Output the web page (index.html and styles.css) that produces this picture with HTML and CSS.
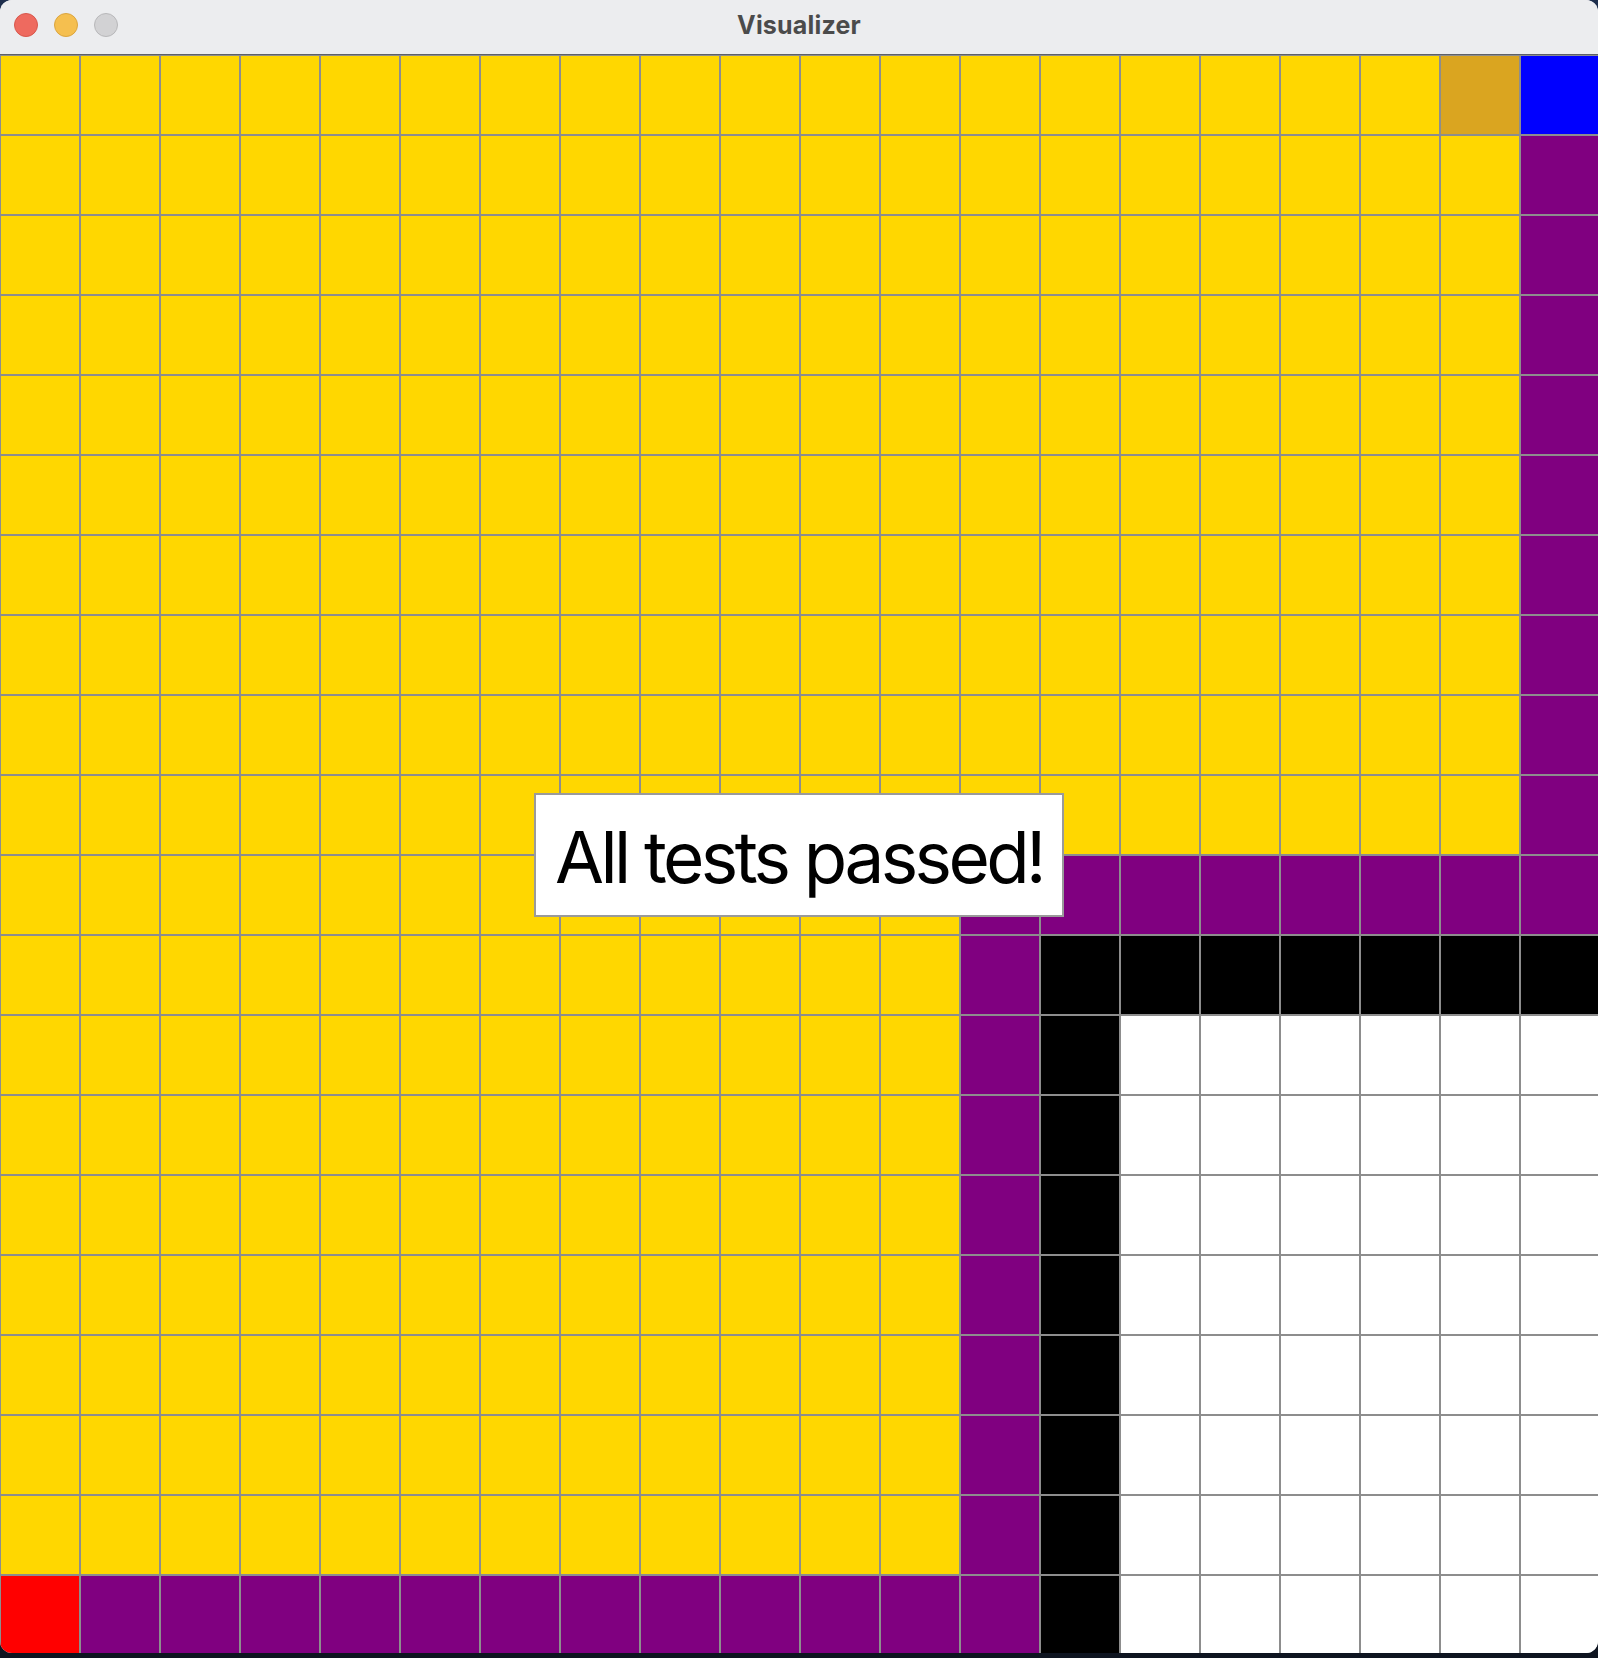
FILE: index.html
```html
<!DOCTYPE html>
<html>
<head>
<meta charset="utf-8">
<title>Visualizer</title>
<link rel="stylesheet" href="styles.css">
</head>
<body>
<div class="window">
  <div class="titlebar">
    <div class="lights">
      <span class="light close"></span>
      <span class="light min"></span>
      <span class="light max"></span>
    </div>
    <div class="title">Visualizer</div>
  </div>
  <div class="board">
    <div class="grid">
      <!-- row 0 -->
      <div class="y"></div><div class="y"></div><div class="y"></div><div class="y"></div><div class="y"></div><div class="y"></div><div class="y"></div><div class="y"></div><div class="y"></div><div class="y"></div><div class="y"></div><div class="y"></div><div class="y"></div><div class="y"></div><div class="y"></div><div class="y"></div><div class="y"></div><div class="y"></div><div class="g"></div><div class="b"></div>
      <!-- row 1 -->
      <div class="y"></div><div class="y"></div><div class="y"></div><div class="y"></div><div class="y"></div><div class="y"></div><div class="y"></div><div class="y"></div><div class="y"></div><div class="y"></div><div class="y"></div><div class="y"></div><div class="y"></div><div class="y"></div><div class="y"></div><div class="y"></div><div class="y"></div><div class="y"></div><div class="y"></div><div class="p"></div>
      <!-- row 2 -->
      <div class="y"></div><div class="y"></div><div class="y"></div><div class="y"></div><div class="y"></div><div class="y"></div><div class="y"></div><div class="y"></div><div class="y"></div><div class="y"></div><div class="y"></div><div class="y"></div><div class="y"></div><div class="y"></div><div class="y"></div><div class="y"></div><div class="y"></div><div class="y"></div><div class="y"></div><div class="p"></div>
      <!-- row 3 -->
      <div class="y"></div><div class="y"></div><div class="y"></div><div class="y"></div><div class="y"></div><div class="y"></div><div class="y"></div><div class="y"></div><div class="y"></div><div class="y"></div><div class="y"></div><div class="y"></div><div class="y"></div><div class="y"></div><div class="y"></div><div class="y"></div><div class="y"></div><div class="y"></div><div class="y"></div><div class="p"></div>
      <!-- row 4 -->
      <div class="y"></div><div class="y"></div><div class="y"></div><div class="y"></div><div class="y"></div><div class="y"></div><div class="y"></div><div class="y"></div><div class="y"></div><div class="y"></div><div class="y"></div><div class="y"></div><div class="y"></div><div class="y"></div><div class="y"></div><div class="y"></div><div class="y"></div><div class="y"></div><div class="y"></div><div class="p"></div>
      <!-- row 5 -->
      <div class="y"></div><div class="y"></div><div class="y"></div><div class="y"></div><div class="y"></div><div class="y"></div><div class="y"></div><div class="y"></div><div class="y"></div><div class="y"></div><div class="y"></div><div class="y"></div><div class="y"></div><div class="y"></div><div class="y"></div><div class="y"></div><div class="y"></div><div class="y"></div><div class="y"></div><div class="p"></div>
      <!-- row 6 -->
      <div class="y"></div><div class="y"></div><div class="y"></div><div class="y"></div><div class="y"></div><div class="y"></div><div class="y"></div><div class="y"></div><div class="y"></div><div class="y"></div><div class="y"></div><div class="y"></div><div class="y"></div><div class="y"></div><div class="y"></div><div class="y"></div><div class="y"></div><div class="y"></div><div class="y"></div><div class="p"></div>
      <!-- row 7 -->
      <div class="y"></div><div class="y"></div><div class="y"></div><div class="y"></div><div class="y"></div><div class="y"></div><div class="y"></div><div class="y"></div><div class="y"></div><div class="y"></div><div class="y"></div><div class="y"></div><div class="y"></div><div class="y"></div><div class="y"></div><div class="y"></div><div class="y"></div><div class="y"></div><div class="y"></div><div class="p"></div>
      <!-- row 8 -->
      <div class="y"></div><div class="y"></div><div class="y"></div><div class="y"></div><div class="y"></div><div class="y"></div><div class="y"></div><div class="y"></div><div class="y"></div><div class="y"></div><div class="y"></div><div class="y"></div><div class="y"></div><div class="y"></div><div class="y"></div><div class="y"></div><div class="y"></div><div class="y"></div><div class="y"></div><div class="p"></div>
      <!-- row 9 -->
      <div class="y"></div><div class="y"></div><div class="y"></div><div class="y"></div><div class="y"></div><div class="y"></div><div class="y"></div><div class="y"></div><div class="y"></div><div class="y"></div><div class="y"></div><div class="y"></div><div class="y"></div><div class="y"></div><div class="y"></div><div class="y"></div><div class="y"></div><div class="y"></div><div class="y"></div><div class="p"></div>
      <!-- row 10 -->
      <div class="y"></div><div class="y"></div><div class="y"></div><div class="y"></div><div class="y"></div><div class="y"></div><div class="y"></div><div class="y"></div><div class="y"></div><div class="y"></div><div class="y"></div><div class="y"></div><div class="p"></div><div class="p"></div><div class="p"></div><div class="p"></div><div class="p"></div><div class="p"></div><div class="p"></div><div class="p"></div>
      <!-- row 11 -->
      <div class="y"></div><div class="y"></div><div class="y"></div><div class="y"></div><div class="y"></div><div class="y"></div><div class="y"></div><div class="y"></div><div class="y"></div><div class="y"></div><div class="y"></div><div class="y"></div><div class="p"></div><div class="k"></div><div class="k"></div><div class="k"></div><div class="k"></div><div class="k"></div><div class="k"></div><div class="k"></div>
      <!-- row 12 -->
      <div class="y"></div><div class="y"></div><div class="y"></div><div class="y"></div><div class="y"></div><div class="y"></div><div class="y"></div><div class="y"></div><div class="y"></div><div class="y"></div><div class="y"></div><div class="y"></div><div class="p"></div><div class="k"></div><div class="w"></div><div class="w"></div><div class="w"></div><div class="w"></div><div class="w"></div><div class="w"></div>
      <!-- row 13 -->
      <div class="y"></div><div class="y"></div><div class="y"></div><div class="y"></div><div class="y"></div><div class="y"></div><div class="y"></div><div class="y"></div><div class="y"></div><div class="y"></div><div class="y"></div><div class="y"></div><div class="p"></div><div class="k"></div><div class="w"></div><div class="w"></div><div class="w"></div><div class="w"></div><div class="w"></div><div class="w"></div>
      <!-- row 14 -->
      <div class="y"></div><div class="y"></div><div class="y"></div><div class="y"></div><div class="y"></div><div class="y"></div><div class="y"></div><div class="y"></div><div class="y"></div><div class="y"></div><div class="y"></div><div class="y"></div><div class="p"></div><div class="k"></div><div class="w"></div><div class="w"></div><div class="w"></div><div class="w"></div><div class="w"></div><div class="w"></div>
      <!-- row 15 -->
      <div class="y"></div><div class="y"></div><div class="y"></div><div class="y"></div><div class="y"></div><div class="y"></div><div class="y"></div><div class="y"></div><div class="y"></div><div class="y"></div><div class="y"></div><div class="y"></div><div class="p"></div><div class="k"></div><div class="w"></div><div class="w"></div><div class="w"></div><div class="w"></div><div class="w"></div><div class="w"></div>
      <!-- row 16 -->
      <div class="y"></div><div class="y"></div><div class="y"></div><div class="y"></div><div class="y"></div><div class="y"></div><div class="y"></div><div class="y"></div><div class="y"></div><div class="y"></div><div class="y"></div><div class="y"></div><div class="p"></div><div class="k"></div><div class="w"></div><div class="w"></div><div class="w"></div><div class="w"></div><div class="w"></div><div class="w"></div>
      <!-- row 17 -->
      <div class="y"></div><div class="y"></div><div class="y"></div><div class="y"></div><div class="y"></div><div class="y"></div><div class="y"></div><div class="y"></div><div class="y"></div><div class="y"></div><div class="y"></div><div class="y"></div><div class="p"></div><div class="k"></div><div class="w"></div><div class="w"></div><div class="w"></div><div class="w"></div><div class="w"></div><div class="w"></div>
      <!-- row 18 -->
      <div class="y"></div><div class="y"></div><div class="y"></div><div class="y"></div><div class="y"></div><div class="y"></div><div class="y"></div><div class="y"></div><div class="y"></div><div class="y"></div><div class="y"></div><div class="y"></div><div class="p"></div><div class="k"></div><div class="w"></div><div class="w"></div><div class="w"></div><div class="w"></div><div class="w"></div><div class="w"></div>
      <!-- row 19 -->
      <div class="r"></div><div class="p"></div><div class="p"></div><div class="p"></div><div class="p"></div><div class="p"></div><div class="p"></div><div class="p"></div><div class="p"></div><div class="p"></div><div class="p"></div><div class="p"></div><div class="p"></div><div class="k"></div><div class="w"></div><div class="w"></div><div class="w"></div><div class="w"></div><div class="w"></div><div class="w"></div>
    </div>
    <div class="popup">All tests passed!</div>
  </div>
</div>
</body>
</html>
```

FILE: styles.css
```css
html, body {
  margin: 0;
  padding: 0;
}

body {
  width: 1598px;
  height: 1658px;
  background: linear-gradient(180deg, #1e2f4d 0%, #141c2c 60%, #0e1420 100%);
  overflow: hidden;
}

.window {
  width: 1598px;
  height: 1653px;
  border-radius: 12px;
  overflow: hidden;
  display: flex;
  flex-direction: column;
  background: #ecedef;
}

.titlebar {
  position: relative;
  height: 54px;
  flex: none;
  background: #ecedef;
  border-bottom: 1px solid #5e6167;
  display: flex;
  align-items: center;
  justify-content: center;
}

.lights {
  position: absolute;
  left: 14px;
  top: 13px;
  display: flex;
  gap: 16px;
}

.light {
  width: 24px;
  height: 24px;
  border-radius: 50%;
  box-sizing: border-box;
}

.close {
  background: #ee6a5f;
  border: 1px solid #d8574c;
}

.min {
  background: #f5bf4f;
  border: 1px solid #dba53f;
}

.max {
  background: #d2d2d4;
  border: 1px solid #b8b8ba;
}

.title {
  font-family: Inter, "Liberation Sans", sans-serif;
  font-weight: 700;
  font-size: 25px;
  color: #4b4b4b;
  letter-spacing: 0.2px;
  margin-top: -4px;
}

.board {
  position: relative;
  flex: 1;
  overflow: hidden;
}

.grid {
  display: grid;
  grid-template-columns: repeat(20, 80px);
  grid-auto-rows: 80px;
  width: 1600px;
}

.grid > div {
  box-sizing: border-box;
  border: 1px solid #8d8d8d;
}

.y { background: #ffd700; }
.g { background: #daa520; }
.b { background: #0000ff; }
.p { background: #800080; }
.k { background: #000000; }
.w { background: #ffffff; }
.r { background: #ff0000; }

.popup {
  position: absolute;
  left: 534px;
  top: 738px;
  width: 530px;
  height: 124px;
  box-sizing: border-box;
  background: #ffffff;
  border: 2px solid #9a9a9a;
  display: flex;
  align-items: center;
  justify-content: center;
  font-family: Inter, "Liberation Sans", sans-serif;
  font-size: 71px;
  font-weight: 400;
  color: #000000;
  letter-spacing: -3.6px;
  white-space: nowrap;
  padding-top: 3px;
}
```
